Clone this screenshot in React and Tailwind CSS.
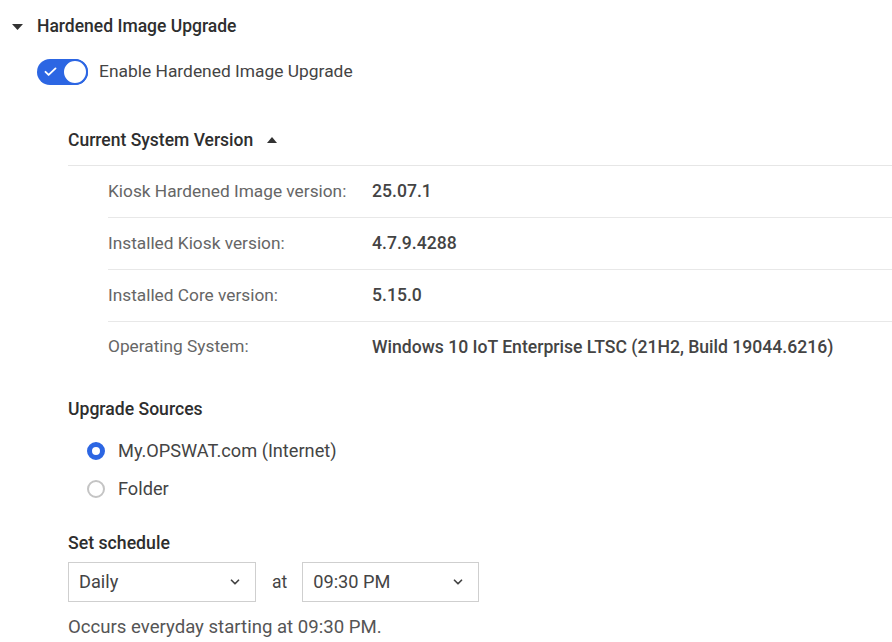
import React from 'react';

const rows = [
  { label: 'Kiosk Hardened Image version:', value: '25.07.1' },
  { label: 'Installed Kiosk version:', value: '4.7.9.4288' },
  { label: 'Installed Core version:', value: '5.15.0' },
  { label: 'Operating System:', value: 'Windows 10 IoT Enterprise LTSC (21H2, Build 19044.6216)' },
];

const Chevron = () => (
  <svg width="14" height="14" viewBox="0 0 24 24" fill="none" stroke="#444" strokeWidth="3" strokeLinecap="round" strokeLinejoin="round">
    <path d="M6 9l6 6 6-6" />
  </svg>
);

const Select = ({ value, width }) => (
  <div className={`h-[40px] ${width} border border-[#cfcfcf] flex items-center justify-between pl-[10px] pr-[13px] text-[18.2px] text-[#444]`}>
    <span>{value}</span>
    <Chevron />
  </div>
);

const App = () => {
  return (
    <div className="w-[892px] h-[642px] bg-white overflow-hidden font-['Roboto',sans-serif] text-[#333]">
      {/* section header */}
      <div className="h-[52px] pt-[1px] flex items-center pl-[12px]">
        <svg width="11" height="6" viewBox="0 0 11 6" className="mr-[14px]">
          <path d="M0 0h11L5.5 6z" fill="#333" />
        </svg>
        <span className="text-[17.5px] font-medium text-[#2e2e2e]">Hardened Image Upgrade</span>
      </div>

      {/* toggle */}
      <div className="h-[38px] pt-[1px] flex items-center pl-[37px]">
        <div className="relative w-[51px] h-[26px] rounded-full bg-[#2c66e3]">
          <svg width="15" height="15" viewBox="0 0 24 24" fill="none" stroke="white" strokeWidth="3" strokeLinecap="round" strokeLinejoin="round" className="absolute left-[6px] top-[5.5px]">
            <path d="M4 12.5l5 5L20 7" />
          </svg>
          <div className="absolute right-0 top-0 w-[26px] h-[26px] rounded-full bg-white border-[2px] border-[#2c66e3]" />
        </div>
        <span className="ml-[11px] text-[17.4px] text-[#444]">Enable Hardened Image Upgrade</span>
      </div>

      <div className="pl-[68px]">
        {/* current system version */}
        <div className="mt-[24px] h-[52px] pt-[1px] flex items-center border-b border-[#e6e6e6]">
          <span className="text-[17.5px] font-medium text-[#2e2e2e]">Current System Version</span>
          <svg width="10" height="6" viewBox="0 0 10 6" className="ml-[14px]">
            <path d="M0 6h10L5 0z" fill="#333" />
          </svg>
        </div>

        <div className="pl-[40px]">
          {rows.map((r, i) => (
            <div
              key={r.label}
              className={`flex items-center ${i < rows.length - 1 ? 'h-[52px] border-b border-[#e8e8e8]' : 'h-[50px]'}`}
            >
              <span className="w-[264px] text-[17.3px] text-[#666]">{r.label}</span>
              <span className="text-[17.6px] font-medium text-[#444]">{r.value}</span>
            </div>
          ))}
        </div>

        {/* upgrade sources */}
        <div className="mt-[25px] h-[24px] flex items-center text-[17.6px] font-medium text-[#2e2e2e]">
          Upgrade Sources
        </div>
        <div className="mt-[11px] pl-[19px]">
          <div className="h-[38px] flex items-center">
            <div className="w-[18px] h-[18px] rounded-full border-[5px] border-[#2c66e3] bg-white" />
            <span className="ml-[13px] text-[18.2px] text-[#444]">My.OPSWAT.com (Internet)</span>
          </div>
          <div className="h-[38px] flex items-center">
            <div className="w-[18px] h-[18px] rounded-full border-[2px] border-[#c4c4c4] bg-white" />
            <span className="ml-[13px] text-[18.2px] text-[#444]">Folder</span>
          </div>
        </div>

        {/* schedule */}
        <div className="mt-[23px] h-[24px] flex items-center text-[17.7px] font-medium text-[#2e2e2e]">
          Set schedule
        </div>
        <div className="mt-[7px] flex items-center">
          <Select value="Daily" width="w-[188px]" />
          <span className="ml-[16px] mr-[15px] text-[17.5px] text-[#444]">at</span>
          <Select value="09:30 PM" width="w-[177px]" />
        </div>
        <div className="mt-[14px] h-[24px] flex items-center text-[18.6px] text-[#555]">
          Occurs everyday starting at 09:30 PM.
        </div>
      </div>
    </div>
  );
};

export default App;
